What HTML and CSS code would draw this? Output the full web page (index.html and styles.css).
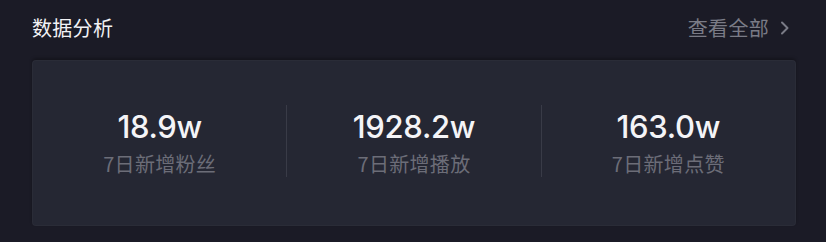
FILE: index.html
```html
<!DOCTYPE html>
<html lang="zh-CN">
<head>
<meta charset="utf-8">
<title>数据分析</title>
<link rel="stylesheet" href="styles.css">
</head>
<body>
<section class="panel">
  <header class="panel-head">
    <h2 class="panel-title">数据分析</h2>
    <a class="more" href="#">查看全部
      <svg class="chev" width="10" height="16" viewBox="0 0 10 16" aria-hidden="true"><path d="M2 2.5 L7.5 8 L2 13.5" fill="none" stroke="currentColor" stroke-width="2" stroke-linecap="round" stroke-linejoin="round"/></svg>
    </a>
  </header>
  <div class="stats">
    <div class="stat">
      <div class="stat-value">18.9w</div>
      <div class="stat-label">7日新增粉丝</div>
    </div>
    <div class="divider"></div>
    <div class="stat">
      <div class="stat-value">1928.2w</div>
      <div class="stat-label">7日新增播放</div>
    </div>
    <div class="divider"></div>
    <div class="stat">
      <div class="stat-value">163.0w</div>
      <div class="stat-label">7日新增点赞</div>
    </div>
  </div>
</section>
</body>
</html>
```
FILE: styles.css
```css
html, body {
  margin: 0;
  padding: 0;
  background: #1b1b26;
}
body {
  width: 826px;
  height: 242px;
  overflow: hidden;
  font-family: "Noto Sans CJK SC", "Noto Sans", sans-serif;
}
.panel {
  padding: 0 30px 16px 32px;
}
.panel-head {
  height: 60px;
  display: flex;
  align-items: center;
  justify-content: space-between;
  padding-bottom: 5px;
  box-sizing: border-box;
}
.panel-title {
  margin: 0;
  font-size: 20px;
  font-weight: 400;
  color: #f2f2f5;
  letter-spacing: 0.3px;
}
.more {
  display: flex;
  align-items: center;
  gap: 11px;
  color: #7a7b86;
  font-size: 20px;
  text-decoration: none;
  margin-right: 6px;
  letter-spacing: 0.3px;
}
.chev {
  display: block;
}
.stats {
  height: 166px;
  box-sizing: border-box;
  background: #252733;
  border-radius: 4px;
  border: 1px solid rgba(255,255,255,0.025);
  box-shadow: 0 -2px 3px rgba(0,0,0,0.25);
  display: flex;
  align-items: center;
}
.stat {
  flex: 1;
  display: flex;
  flex-direction: column;
  align-items: center;
  padding-bottom: 2px;
}
.stat-value {
  font-family: "Inter", "Liberation Sans", sans-serif;
  font-weight: 500;
  font-size: 31px;
  line-height: 36px;
  color: #f4f4f7;
  letter-spacing: -0.3px;
}
.stat-label {
  margin-top: 7px;
  font-size: 20px;
  line-height: 24px;
  color: #6c6d78;
  letter-spacing: 0.3px;
}
.divider {
  width: 1px;
  height: 72px;
  background: #393b47;
  margin-top: -4px;
}
```
